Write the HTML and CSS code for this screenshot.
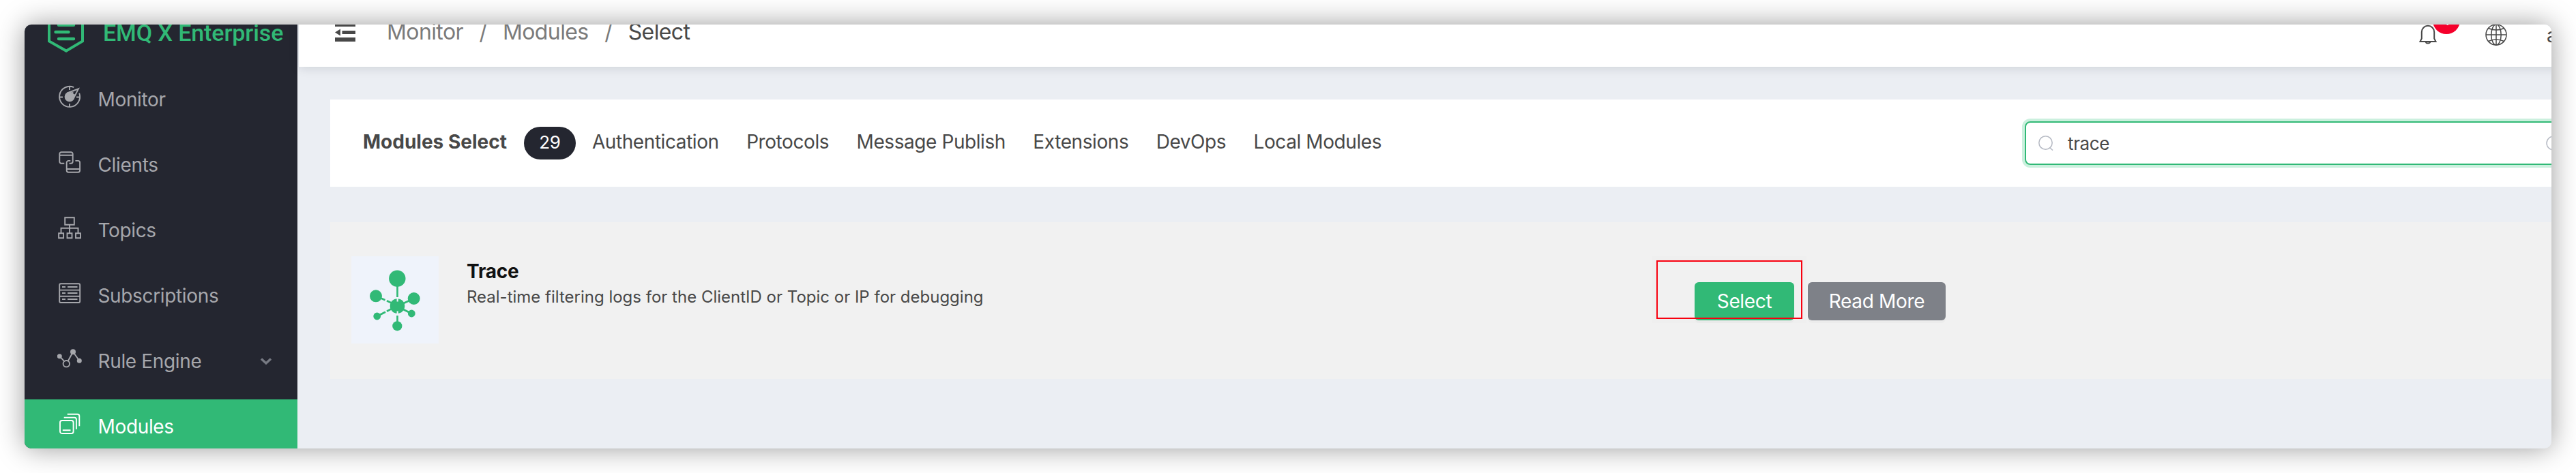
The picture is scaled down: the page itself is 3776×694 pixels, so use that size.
FILE: index.html
```html
<!DOCTYPE html>
<html lang="en">
<head>
<meta charset="utf-8">
<title>EMQ X Enterprise</title>
<link rel="stylesheet" href="styles.css">
</head>
<body>
<div class="window">
  <aside class="sidebar">
    <div class="brand">
      <svg class="brand-logo" width="54" height="60" viewBox="0 0 54 60" fill="none" stroke="#31b976" stroke-width="4">
        <path d="M27 2.3 51 16.5V43.4L27 57.6 2 43.4V16.5Z"/>
        <path d="M16 19.7h22M11.5 30h19M16 40h22" stroke-linecap="round" stroke-width="4.4"/>
      </svg>
      <span class="brand-name">EMQ X Enterprise</span>
    </div>
    <nav class="menu">
      <a class="menu-item">
        <svg class="menu-icon" viewBox="0 0 36 36">
          <path d="M24.2 4.2A15 15 0 1 0 32.2 12.8M18 3v5M18 28v5M3 18.5h5M28 18.5h5"/>
          <circle cx="18" cy="18" r="6.4" class="solid"/>
          <path d="M14.5 12.5 31 6.3 23.5 21"/><path d="m17 13 7-2.5-1.500 3 3.500 1L23 20Z" class="solid" stroke="none"/>
        </svg>
        <span>Monitor</span>
      </a>
      <a class="menu-item">
        <svg class="menu-icon" viewBox="0 0 36 36">
          <path d="M10.300 19.800H6a2.700 2.700 0 0 1-2.700-2.700V5.900a2.700 2.700 0 0 1 2.700-2.700h14a2.700 2.700 0 0 1 2.700 2.700V17a2.700 2.700 0 0 1-2.700 2.700h-2.500M3.300 7.800h19.400"/>
          <path d="M19.300 15.900h-2.900a2.700 2.700 0 0 0-2.700 2.700V30a2.700 2.700 0 0 0 2.700 2.700h14a2.700 2.700 0 0 0 2.700-2.700V18.600a2.700 2.700 0 0 0-2.700-2.700h-4M13.700 28h19.400"/>
        </svg>
        <span>Clients</span>
      </a>
      <a class="menu-item">
        <svg class="menu-icon" viewBox="0 0 36 36">
          <path d="M11.200 3.200h13.600v10.600H11.200ZM18 13.800v12M5.500 25.800v-7h25v7M2.100 26.300h7v7h-7ZM14.500 26.300h7v7h-7ZM27 26.300h7v7h-7Z"/>
        </svg>
        <span>Topics</span>
      </a>
      <a class="menu-item">
        <svg class="menu-icon" viewBox="0 0 36 36">
          <rect x="3.200" y="4.200" width="30" height="27.800" rx="2"/>
          <path d="M3.200 13.600h30M3.200 22.700h30M7 9h5M15 9h14.500M7 18h5M15 18h14.500M7 27h5M15 27h14.500"/>
        </svg>
        <span>Subscriptions</span>
      </a>
      <a class="menu-item">
        <svg class="menu-icon" viewBox="0 0 36 36">
          <path d="m3.300 14.700 7 7.500M15.800 21.500 23 8.300l9.300 13"/>
          <circle cx="13.300" cy="25.700" r="4.700"/>
          <circle cx="3.300" cy="14.700" r="3.500" class="dot"/><circle cx="23" cy="8.300" r="4" class="dot"/><circle cx="32.300" cy="21.300" r="3.500" class="dot"/>
        </svg>
        <span>Rule Engine</span>
        <svg class="chevron" width="18" height="12" viewBox="0 0 18 12"><path d="m2 2.500 7 6.500 7-6.500" fill="none" stroke="#777a83" stroke-width="3.400"/></svg>
      </a>
      <a class="menu-item active">
        <svg class="menu-icon" viewBox="0 0 36 36">
          <rect x="4" y="13" width="19.600" height="19" rx="3"/>
          <path d="M7.800 27.300h11.700M9.700 8.600h15.400a2.800 2.800 0 0 1 2.800 2.800v14.300M14.700 3.800h14.800a2.800 2.800 0 0 1 2.800 2.800v14.700"/>
        </svg>
        <span>Modules</span>
      </a>
    </nav>
  </aside>

  <main class="main">
    <header class="topbar">
      <svg class="collapse" width="30" height="28" viewBox="0 0 30 28" fill="#484848"><path d="M0 0h30v6H0ZM10.500 12H30v5H10.500ZM0 22h30v6H0ZM8 9.500v10L0 14.500Z"/></svg>
      <div class="breadcrumb">
        <span>Monitor</span><i>/</i><span>Modules</span><i>/</i><b>Select</b>
      </div>
      <div class="tools">
        <div class="bell">
          <svg width="26" height="30" viewBox="0 0 26 30" fill="none" stroke="#484848" stroke-width="2"><path d="M1.500 26h23l-2.300-4.500V12a9.200 9.200 0 0 0-18.400 0v9.500Z"/><path d="M9.500 26.200a3.600 3 0 0 0 7 0"/></svg>
          <span class="count">1</span>
        </div>
        <svg class="globe" width="32" height="32" viewBox="0 0 32 32" fill="none" stroke="#484848" stroke-width="1.500"><circle cx="16" cy="16" r="15"/><ellipse cx="16" cy="16" rx="7.200" ry="15"/><path d="M16 1v30M1 16h30M4.500 6.500q11.500 5 23 0M4.500 25.500q11.500-5 23 0"/></svg>
        <span class="user">a</span>
      </div>
    </header>

    <div class="content">
      <section class="filter">
        <strong class="filter-title">Modules Select</strong>
        <span class="total">29</span>
        <div class="tabs">
          <a>Authentication</a><a>Protocols</a><a>Message Publish</a><a>Extensions</a><a>DevOps</a><a>Local Modules</a>
        </div>
        <div class="search">
          <svg width="22" height="22" viewBox="0 0 22 22" fill="none" stroke="#b5b9c3" stroke-width="1.500"><circle cx="10.500" cy="10.500" r="9.700"/><path d="m16.500 17.500 4.500 4"/></svg>
          <span class="query">trace</span>
          <svg width="22" height="22" viewBox="0 0 22 22" fill="none" stroke="#b5b9c3" stroke-width="1.500"><circle cx="11" cy="11" r="10"/></svg>
        </div>
      </section>

      <section class="module">
        <svg class="module-icon" width="128" height="128" viewBox="0 0 128 128" fill="#31b976">
          <g stroke="#31b976" stroke-width="2.700">
            <path d="M67.500 40v20M67.500 87v12M36 58.300l13.500 6M52 65.300l12 5.700M70 72l21.700-10M70 75l18.300 9M37.700 88l12.300-6.300M52 80.700l12-6.300"/>
          </g>
          <circle cx="67.500" cy="73" r="10.800"/><circle cx="67.300" cy="32.700" r="12.200"/>
          <circle cx="36" cy="58.300" r="9"/><circle cx="91.700" cy="62" r="9"/>
          <circle cx="88.300" cy="84" r="5.400"/><circle cx="37.700" cy="88" r="5.400"/><circle cx="67.300" cy="102.300" r="7.100"/>
          <path d="M67.700 61v5.500M67.700 80.500v5.500" stroke="#eff3fb" stroke-width="2.200"/>
        </svg>
        <div class="module-text">
          <h2>Trace</h2>
          <p>Real-time filtering logs for the ClientID or Topic or IP for debugging</p>
        </div>
        <div class="actions">
          <span class="highlight"></span>
          <a class="btn primary">Select</a>
          <a class="btn">Read More</a>
        </div>
      </section>
    </div>
  </main>
</div>
</body>
</html>
```
FILE: styles.css
```css
* { box-sizing: border-box; }

body {
  margin: 0;
  padding: 36px;
  height: 694px;
  overflow: hidden;
  background: #fff;
  color: #484848;
  font: 400 28px/34px Inter, "Liberation Sans", sans-serif;
  letter-spacing: -0.35px;
}

.window {
  display: flex;
  width: 3704px;
  height: 622px;
  overflow: hidden;
  border-radius: 10px;
  background: #ebeef3;
  box-shadow: 0 0 40px rgba(0, 0, 0, 0.4);
}

/* Sidebar */
.sidebar {
  flex: none;
  width: 400px;
  background: #242630;
  color: #a6a7ac;
}

.brand {
  display: flex;
  align-items: center;
  gap: 27px;
  height: 106px;
  margin: -42px 0 6px;
  padding-left: 34px;
}

.brand-logo { flex: none; }

.brand-name {
  padding-top: 2px;
  color: #31b976;
  font: 500 34px/40px Roboto, sans-serif;
  letter-spacing: -0.1px;
  white-space: nowrap;
}

.menu {
  display: flex;
  flex-direction: column;
  gap: 16px;
}

.menu-item {
  display: flex;
  align-items: center;
  height: 80px;
  padding: 0 37px 0 48px;
}

.menu-icon {
  width: 36px;
  height: 36px;
  margin: 0 23.5px 8px 0;
  fill: none;
  stroke: currentColor;
  stroke-width: 1.9;
}

.menu-icon .solid { fill: currentColor; }
.menu-icon .dot { fill: currentColor; stroke: none; }

.chevron { margin-left: auto; }

.active {
  background: #31b976;
  color: #fff;
}

/* Top bar */
.main {
  flex: none;
  width: 3430px;
  margin-left: 2px;
}

.topbar {
  display: flex;
  align-items: center;
  height: 104px;
  margin-top: -42px;
  padding: 0 119px 0 53px;
  background: #fff;
  box-shadow: 0 2px 14px rgba(0, 21, 41, 0.13);
}

.collapse { margin-top: 2px; }

.breadcrumb {
  display: flex;
  margin: 2px 0 0 46px;
  color: #7b7b7b;
  font-size: 32px;
  letter-spacing: -0.6px;
}

.breadcrumb i {
  width: 58px;
  text-align: center;
  font-style: normal;
}

.breadcrumb b {
  color: #484848;
  font-weight: 400;
}

.tools {
  display: flex;
  align-items: center;
  margin: 9px 0 0 auto;
}

.bell {
  position: relative;
  display: flex;
  margin: 0 71px 2px 0;
}

.count {
  position: absolute;
  left: 20px;
  top: -25px;
  width: 40px;
  height: 40px;
  border-radius: 20px;
  background: #f5002b;
  color: #fff;
  font-size: 24px;
  line-height: 38px;
  text-align: center;
}

.user {
  width: 16px;
  margin: 3px 0 0 58px;
}

/* Content */
.content { padding: 48px 48px 0 46px; }

.filter {
  display: flex;
  align-items: center;
  height: 128px;
  padding: 0 44px 0 48px;
  background: #fff;
}

.filter-title {
  margin-bottom: 4px;
  font-weight: 700;
  letter-spacing: 0;
}

.total {
  width: 76px;
  height: 48px;
  margin: 0 24px 0 25px;
  border-radius: 24px;
  background: #242630;
  color: #fff;
  font-size: 26px;
  line-height: 46px;
  text-align: center;
}

.tabs {
  display: flex;
  gap: 40.4px;
  margin-bottom: 4px;
  letter-spacing: -0.42px;
}

.search {
  display: flex;
  align-items: center;
  width: 808px;
  height: 64px;
  margin-left: auto;
  padding: 0 20px 0 18px;
  border: 2px solid #31b976;
  border-radius: 8px;
  box-shadow: 0 0 0 4px #cbf0de;
}

.query {
  flex: 1;
  margin: 2px 0 0 21px;
  font-size: 26px;
}

/* Module card */
.module {
  display: grid;
  grid-template-columns: 169px 1800px auto;
  justify-content: start;
  height: 230px;
  margin-top: 52px;
  padding: 50px 31px;
  background: #f1f1f1;
}

.module-icon { background: #eff3fb; }

.module-text h2 {
  margin: 5px 0 0;
  color: #111;
  font-size: 28px;
  font-weight: 700;
  line-height: 34px;
  letter-spacing: -0.2px;
}

.module-text p {
  margin: 6px 0 0;
  font-size: 24px;
  line-height: 30px;
  letter-spacing: 0;
}

.actions {
  position: relative;
  display: flex;
  align-items: flex-start;
  gap: 20px;
  padding-top: 38px;
}

.btn {
  width: 202px;
  height: 56px;
  border-radius: 6px;
  background: #7e8188;
  box-shadow: 0 4px 0 rgba(0, 0, 0, 0.02);
  color: #fff;
  line-height: 56px;
  text-align: center;
}

.primary {
  width: 146px;
  background: #31b976;
}

.highlight {
  position: absolute;
  left: -56px;
  top: 6px;
  width: 214px;
  height: 86px;
  border: 2px solid #f8000f;
  box-shadow: 0 0 0 6px rgba(0, 0, 0, 0.008);
}
```
